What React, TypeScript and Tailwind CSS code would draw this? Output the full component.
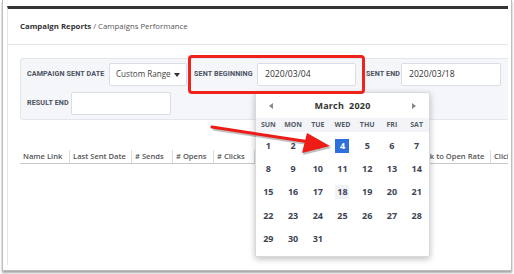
const cols = [
  { label: 'Name Link', w: 'w-[49px]' },
  { label: 'Last Sent Date', w: 'w-[62px]' },
  { label: '# Sends', w: 'w-[41px]' },
  { label: '# Opens', w: 'w-[41px]' },
  { label: '# Clicks', w: 'w-[41px]' },
  { label: 'Open Rate', w: 'w-[77px]' },
  { label: 'Click Rate', w: 'w-[82px]' },
  { label: 'Click to Open Rate', w: 'w-[77px]' },
  { label: 'Clicks', w: 'w-[60px]' },
];

const days = ['SUN', 'MON', 'TUE', 'WED', 'THU', 'FRI', 'SAT'];

const weeks = [
  [1, 2, 3, 4, 5, 6, 7],
  [8, 9, 10, 11, 12, 13, 14],
  [15, 16, 17, 18, 19, 20, 21],
  [22, 23, 24, 25, 26, 27, 28],
  [29, 30, 31, 0, 0, 0, 0],
];

function Label({ children, w }: { children: string; w: string }) {
  return (
    <span className={`${w} shrink-0 font-['Roboto',sans-serif] text-[7.2px] font-bold tracking-[0.1px] text-[#4b5261] whitespace-nowrap`}>
      {children}
    </span>
  );
}

function Field({ value, w }: { value?: string; w: string }) {
  return (
    <div className={`${w} shrink-0 h-[23px] bg-white border border-[#d9dde4] rounded-[2px] flex items-center px-[7px] text-[8.6px] text-[#333]`}>
      {value}
    </div>
  );
}

function DatePicker() {
  return (
    <div className="absolute left-[255px] top-[92px] w-[175px] h-[165px] bg-white border border-[#d6d9de] rounded-[2px] shadow-[0_2px_6px_rgba(0,0,0,0.25)]">
      {/* month header */}
      <div className="h-[25px] flex items-center justify-between px-[13px]">
        <span className="w-0 h-0 border-y-[3px] border-y-transparent border-r-[4px] border-r-[#888]" />
        <span className="text-[9px] font-bold text-[#333] tracking-[0.2px]">March&nbsp; 2020</span>
        <span className="w-0 h-0 border-y-[3px] border-y-transparent border-l-[4px] border-l-[#888]" />
      </div>
      <div className="grid grid-cols-7 h-[14px] bg-[#f3f4f7] items-center">
        {days.map((d) => (
          <span key={d} className="text-center text-[7px] font-bold text-[#555b66]">{d}</span>
        ))}
      </div>
      <div className="pt-[2px]">
        {weeks.map((wk, i) => (
          <div key={i} className="grid grid-cols-7 h-[23.3px] items-center">
            {wk.map((n, j) => (
              <div key={j} className="flex justify-center">
                {n === 4 ? (
                  <span className="w-[14px] h-[14px] bg-[#2f6fdb] text-white text-[9px] font-bold flex items-center justify-center">4</span>
                ) : n === 18 ? (
                  <span className="w-[14px] h-[14px] bg-[#f1f2f5] text-[#3d4452] text-[9px] font-bold flex items-center justify-center">18</span>
                ) : n ? (
                  <span className="text-[9px] font-bold text-[#3d4452]">{n}</span>
                ) : null}
              </div>
            ))}
          </div>
        ))}
      </div>
    </div>
  );
}

export default function App() {
  return (
    <div className="w-[514px] h-[274px] bg-white relative overflow-hidden font-['Open_Sans',sans-serif]">
      {/* screenshot frame */}
      <div className="ml-[2px] w-[510px] h-[271px] border-x border-b border-[#bdbdbd] shadow-[0_2px_2px_rgba(0,0,0,0.35)] bg-white pl-[4px] pr-[3px] pt-[6px]">
        <div className="h-[259px] border-l border-[#e6e6e6] border-t-[3px] border-t-[#333] overflow-hidden">
          {/* breadcrumb */}
          <div className="h-[36px] border-b border-[#e4e4e4] flex items-center pl-[12px] text-[7.8px] text-[#555]">
            <span className="font-bold text-[#333]">Campaign Reports</span>
            <span className="ml-[2px]">/ Campaigns Performance</span>
          </div>

          <div className="pl-[12px]">
            {/* filters */}
            <div className="mt-[13px] w-[500px] h-[62px] bg-[#f4f6fa] border border-[#e2e6ed] rounded-[3px] pl-[6px] pt-[4px]">
              <div className="flex items-center h-[23px]">
                <Label w="w-[76px]">CAMPAIGN SENT DATE</Label>
                <div className="ml-[6px] w-[78px] shrink-0 h-[23px] bg-white border border-[#d9dde4] rounded-[2px] flex items-center justify-between pl-[6px] pr-[6px] text-[8.1px] text-[#444] whitespace-nowrap">
                  Custom Range
                  <span className="w-0 h-0 border-x-[3.5px] border-x-transparent border-t-[4px] border-t-[#333]" />
                </div>
                <div className="ml-[7px] flex">
                  <Label w="w-[60px]">SENT BEGINNING</Label>
                </div>
                <div className="ml-[3px]">
                  <Field value="2020/03/04" w="w-[99px]" />
                </div>
                <div className="ml-[10px] flex">
                  <Label w="w-[34px]">SENT END</Label>
                </div>
                <div className="ml-[1px]">
                  <Field value="2020/03/18" w="w-[100px]" />
                </div>
              </div>
              <div className="flex items-center h-[22px] mt-[6px]">
                <Label w="w-[44px]">RESULT END</Label>
                <Field w="w-[100px]" />
              </div>
            </div>

            {/* table header */}
            <div className="mt-[30px] flex w-[600px] h-[14px] border-b border-[#c8c8c8]">
              {cols.map((c, i) => (
                <div
                  key={c.label}
                  className={`${c.w} shrink-0 pl-[3px] text-[7.6px] font-semibold text-[#555] leading-[13px] whitespace-nowrap overflow-hidden ${i > 0 ? 'border-l border-[#dcdcdc]' : ''}`}
                >
                  {c.label}
                </div>
              ))}
            </div>
          </div>
        </div>
      </div>

      <DatePicker />

      {/* red highlight box */}
      <div className="absolute left-[188px] top-[55px] w-[177px] h-[39px] border-[3px] border-[#f0221a] rounded-[4px]" />

      {/* red arrow */}
      <svg className="absolute left-0 top-0" width="514" height="274" viewBox="0 0 514 274">
        <g transform="translate(1 2)" opacity="0.25">
          <line x1="212" y1="127" x2="310" y2="142" stroke="#000" strokeWidth="3" />
          <polygon points="307,133 302,153 330,146" fill="#000" />
        </g>
        <line x1="212" y1="127" x2="310" y2="142" stroke="#ee1c16" strokeWidth="3" strokeLinecap="round" />
        <polygon points="307,133 302,153 330,146" fill="#ee1c16" />
      </svg>
    </div>
  );
}
